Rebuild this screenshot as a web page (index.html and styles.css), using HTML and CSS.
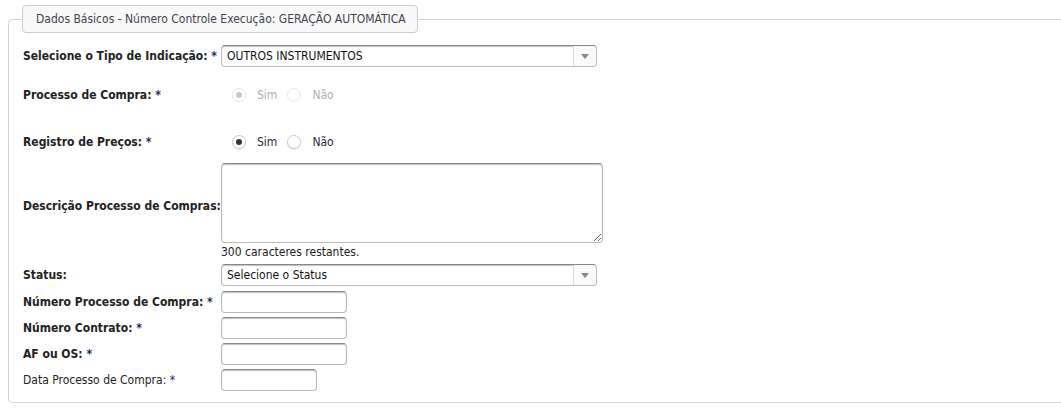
FILE: index.html
```html
<!DOCTYPE html>
<html lang="pt-BR">
<head>
<meta charset="utf-8">
<title>Dados Básicos</title>
<link rel="stylesheet" href="styles.css">
</head>
<body>
<fieldset class="box">
  <legend class="box-title">Dados Básicos - Número Controle Execução: GERAÇÃO AUTOMÁTICA</legend>
  <div class="form">
    <div class="row row-tipo">
      <label class="lbl">Selecione o Tipo de Indicação: <span class="req">*</span></label>
      <div class="select wide">
        <span class="select-text">OUTROS INSTRUMENTOS</span>
        <span class="select-arrow"><svg width="8" height="5" viewBox="0 0 8 5"><path d="M0 0h8L4 5z" fill="#888"/></svg></span>
      </div>
    </div>
    <div class="row row-proc">
      <label class="lbl">Processo de Compra: <span class="req">*</span></label>
      <div class="radios disabled">
        <span class="radio checked"></span><span class="opt">Sim</span>
        <span class="radio"></span><span class="opt">Não</span>
      </div>
    </div>
    <div class="row row-reg">
      <label class="lbl">Registro de Preços: <span class="req">*</span></label>
      <div class="radios">
        <span class="radio checked"></span><span class="opt">Sim</span>
        <span class="radio"></span><span class="opt">Não</span>
      </div>
    </div>
    <div class="row row-desc">
      <label class="lbl lbl-desc">Descrição Processo de Compras:</label>
      <textarea class="area"></textarea>
    </div>
    <div class="row row-count">
      <span></span>
      <span class="count">300 caracteres restantes.</span>
    </div>
    <div class="row row-status">
      <label class="lbl">Status:</label>
      <div class="select wide">
        <span class="select-text">Selecione o Status</span>
        <span class="select-arrow"><svg width="8" height="5" viewBox="0 0 8 5"><path d="M0 0h8L4 5z" fill="#888"/></svg></span>
      </div>
    </div>
    <div class="row row-input">
      <label class="lbl">Número Processo de Compra: <span class="req">*</span></label>
      <input class="txt" type="text">
    </div>
    <div class="row row-input">
      <label class="lbl">Número Contrato: <span class="req">*</span></label>
      <input class="txt" type="text">
    </div>
    <div class="row row-input">
      <label class="lbl">AF ou OS: <span class="req">*</span></label>
      <input class="txt" type="text">
    </div>
    <div class="row row-input">
      <label class="lbl normal">Data Processo de Compra: <span class="req">*</span></label>
      <input class="txt short" type="text">
    </div>
  </div>
</fieldset>
</body>
</html>
```

FILE: styles.css
```css
html, body {
  margin: 0;
  padding: 0;
  background: #fff;
  overflow: hidden;
}
body {
  font-family: "DejaVu Sans Condensed", "DejaVu Sans", sans-serif;
  font-size: 12px;
  color: #333;
}
.box {
  margin: 5px -10px 0 8px;
  padding: 0 0 11px 14px;
  border: 1px solid #d4d4d4;
  border-radius: 4px;
  min-width: 0;
}
.box-title {
  padding: 0 11px 0 13px;
  margin-left: -1px;
  height: 26px;
  line-height: 26px;
  border: 1px solid #ccc;
  border-radius: 4px;
  background: #f9f9f9;
  color: #404350;
  font-size: 12px;
}
.form {
  display: flex;
  flex-direction: column;
  padding-top: 12px;
}
.row {
  display: grid;
  grid-template-columns: 198px 1fr;
  align-items: center;
}
.lbl {
  font-weight: bold;
  color: #222;
  white-space: nowrap;
}
.lbl.normal {
  font-weight: normal;
}
.lbl-desc {
  padding-top: 5px;
}
.req {
  color: #1a2a6a;
}
.select {
  height: 22px;
  box-sizing: border-box;
  border: 1px solid #bbb;
  border-top-color: #888;
  border-radius: 4px;
  box-shadow: inset 0 1px 1px rgba(0,0,0,0.25);
  display: flex;
  align-items: stretch;
  background: #fff;
}
.select.wide {
  width: 376px;
}
.select-text {
  flex: 1;
  padding-left: 5px;
  line-height: 20px;
  color: #111;
}
.select-arrow {
  width: 22px;
  border-left: 1px solid #ddd;
  background: #fafafa;
  border-radius: 0 4px 4px 0;
  display: flex;
  align-items: center;
  justify-content: center;
}
.row-tipo { height: 22px; }
.row-proc { height: 22px; margin-top: 17px; }
.row-reg { height: 22px; margin-top: 25px; }
.row-desc { margin-top: 10px; }
.row-count { margin-top: 2px; height: 19px; }
.row-status { margin-top: 0; }
.row-input { margin-top: 4px; }
.row-status + .row-input { margin-top: 5px; }
.radios {
  display: flex;
  align-items: center;
  padding-left: 11px;
}
.radio {
  width: 14px;
  height: 14px;
  box-sizing: border-box;
  border: 1px solid #ccc;
  border-radius: 50%;
  background: #fff;
  display: flex;
  align-items: center;
  justify-content: center;
  box-shadow: 0 1px 1px rgba(0,0,0,0.08);
}
.radio.checked::after {
  content: "";
  width: 6px;
  height: 6px;
  border-radius: 50%;
  background: #333;
}
.opt {
  margin-left: 11px;
  margin-right: 10px;
  color: #2a2e3e;
}
.radios.disabled .radio { border-color: #e6e6e6; box-shadow: none; }
.radios.disabled .radio.checked::after { background: #c8c8c8; }
.radios.disabled .opt { color: #b0b0b0; }
.area {
  width: 382px;
  height: 80px;
  box-sizing: border-box;
  margin: 0;
  border: 1px solid #bbb;
  border-top-color: #888;
  border-radius: 4px;
  box-shadow: inset 0 1px 1px rgba(0,0,0,0.25);
  resize: both;
  font: inherit;
}
.count {
  color: #222;
  line-height: 14px;
  align-self: start;
}
.txt {
  width: 126px;
  height: 22px;
  box-sizing: border-box;
  margin: 0;
  padding: 0 4px;
  border: 1px solid #bbb;
  border-top-color: #888;
  border-radius: 4px;
  box-shadow: inset 0 1px 1px rgba(0,0,0,0.25);
  font: inherit;
}
.txt.short {
  width: 96px;
}
```
